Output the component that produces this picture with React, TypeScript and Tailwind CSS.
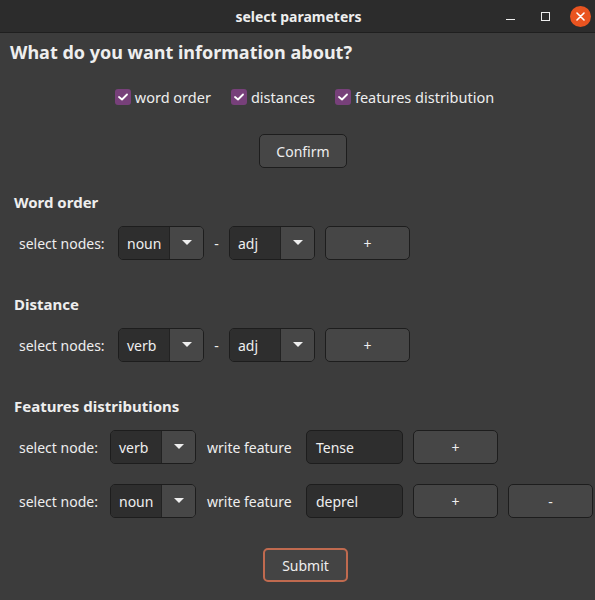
const font = { fontFamily: '"Noto Sans", "Open Sans", sans-serif' };

function Check({ label }: { label: string }) {
  return (
    <label className="flex items-center gap-[4px] text-[14.5px] text-[#eeeeee]">
      <span className="w-[16px] h-[16px] rounded-[3px] bg-[#77407a] flex items-center justify-center">
        <svg width="10" height="8" viewBox="0 0 10 8">
          <path d="M1 4 L4 6.5 L9 1.5" stroke="#ffffff" strokeWidth="1.8" fill="none" strokeLinecap="round" strokeLinejoin="round" />
        </svg>
      </span>
      {label}
    </label>
  );
}

function Combo({ value, w = 85, split = 51 }: { value: string; w?: number; split?: number }) {
  return (
    <div
      className="h-[34px] flex rounded-[5px] border border-[#1d1d1d] overflow-hidden text-[14px] text-[#eeeeee]"
      style={{ width: w }}
    >
      <div className="bg-[#2e2e2e] flex items-center pl-[8px] border-r border-[#222222]" style={{ width: split }}>
        {value}
      </div>
      <div className="flex-1 bg-[#474747] flex items-center justify-center">
        <svg width="10" height="6" viewBox="0 0 10 6">
          <path d="M0 0 L10 0 L5 5 Z" fill="#eeeeee" />
        </svg>
      </div>
    </div>
  );
}

function Btn({ children, w = 85 }: { children: React.ReactNode; w?: number }) {
  return (
    <button
      className="h-[34px] rounded-[5px] border border-[#1d1d1d] bg-[#464646] text-[14px] text-[#eeeeee] flex items-center justify-center"
      style={{ width: w }}
    >
      {children}
    </button>
  );
}

function Input({ value }: { value: string }) {
  return (
    <div className="w-[97px] h-[34px] rounded-[5px] border border-[#1d1d1d] bg-[#2e2e2e] flex items-center pl-[9px] text-[14px] text-[#eeeeee]">
      {value}
    </div>
  );
}

function PairRow({ first }: { first: string }) {
  return (
    <div className="flex items-center pl-[19px] mt-[14px] text-[14px] text-[#eeeeee]">
      <span className="w-[99px]">select nodes:</span>
      <Combo value={first} w={86} />
      <span className="w-[25px] text-center">-</span>
      <Combo value="adj" w={86} />
      <span className="w-[10px]" />
      <Btn>+</Btn>
    </div>
  );
}

export default function App() {
  return (
    <div className="w-[595px] h-[600px] bg-[#3c3c3c] flex flex-col overflow-hidden" style={font}>
      {/* title bar */}
      <div className="h-[33px] bg-[#2c2c2c] border-b border-[#1f1f1f] flex items-center relative shrink-0">
        <div className="flex-1 text-center text-[14px] font-bold text-[#eeeeee] pl-[2px]">select parameters</div>
        <div className="absolute right-[4px] top-0 h-[32px] flex items-center">
          <span className="w-[9px] h-[1px] bg-[#eeeeee] mt-[6px] mr-[26px]" />
          <span className="w-[9px] h-[9px] border border-[#eeeeee] mr-[20px]" />
          <span className="w-[21px] h-[21px] rounded-full bg-[#e95420] flex items-center justify-center">
            <svg width="9" height="9" viewBox="0 0 9 9">
              <path d="M1 1 L8 8 M8 1 L1 8" stroke="#ffffff" strokeWidth="1.6" strokeLinecap="round" />
            </svg>
          </span>
        </div>
      </div>

      <div className="pl-[10px] pt-[8px] text-[18px] font-bold text-[#eeeeee] leading-[22px]">
        What do you want information about?
      </div>

      <div className="flex justify-center gap-[20px] mt-[24px] pl-[14px] leading-[20px]">
        <Check label="word order" />
        <Check label="distances" />
        <Check label="features distribution" />
      </div>

      <div className="flex justify-center mt-[27px] pl-[11px]">
        <Btn w={88}>Confirm</Btn>
      </div>

      <div className="pl-[14px] mt-[24px] text-[15px] font-bold text-[#eeeeee] leading-[20px]">Word order</div>
      <PairRow first="noun" />

      <div className="pl-[14px] mt-[34px] text-[15px] font-bold text-[#eeeeee] leading-[20px]">Distance</div>
      <PairRow first="verb" />

      <div className="pl-[14px] mt-[34px] text-[15px] font-bold text-[#eeeeee] leading-[20px]">Features distributions</div>
      <div className="flex flex-col gap-[20px] mt-[14px]">
        <div className="flex items-center pl-[19px] text-[14px] text-[#eeeeee]">
          <span className="w-[91px]">select node:</span>
          <Combo value="verb" w={86} />
          <span className="w-[110px] pl-[11px]">write feature</span>
          <Input value="Tense" />
          <span className="w-[10px]" />
          <Btn>+</Btn>
        </div>
        <div className="flex items-center pl-[19px] text-[14px] text-[#eeeeee]">
          <span className="w-[91px]">select node:</span>
          <Combo value="noun" w={86} />
          <span className="w-[110px] pl-[11px]">write feature</span>
          <Input value="deprel" />
          <span className="w-[10px]" />
          <Btn>+</Btn>
          <span className="w-[10px]" />
          <Btn>-</Btn>
        </div>
      </div>

      <div className="flex justify-center mt-[30px] pl-[16px]">
        <button className="w-[85px] h-[34px] rounded-[5px] border-2 border-[#c06a4f] bg-[#444444] text-[14px] text-[#eeeeee]">
          Submit
        </button>
      </div>
    </div>
  );
}
